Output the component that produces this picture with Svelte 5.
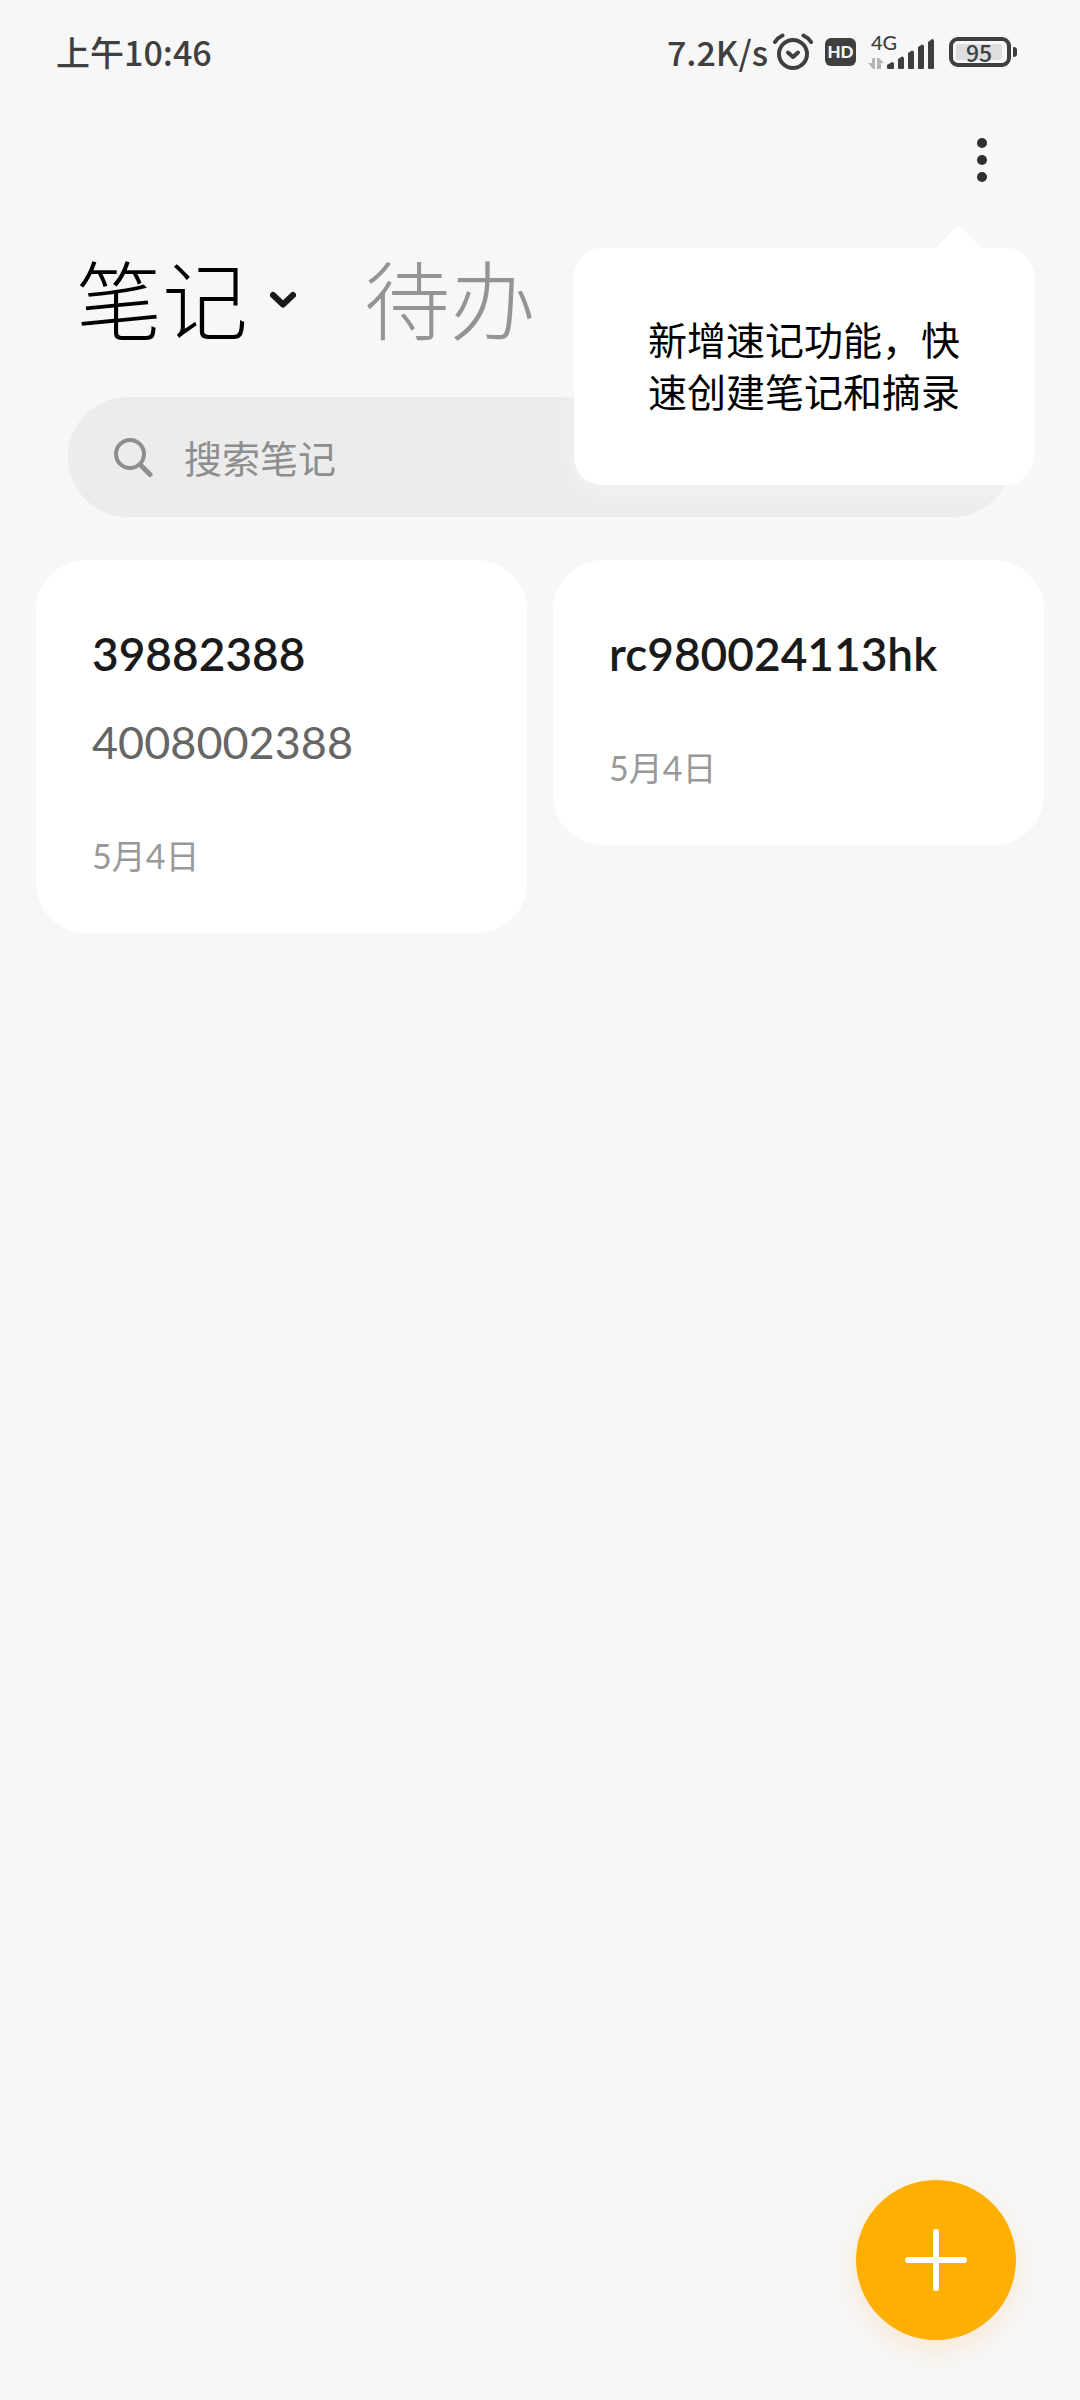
<script lang="ts">
  interface Note {
    id: number;
    title: string;
    body?: string;
    date: string;
  }

  const notes: Note[] = [
    { id: 1, title: '39882388', body: '4008002388', date: '5月4日' },
    { id: 2, title: 'rc980024113hk', date: '5月4日' },
  ];

  let activeTab = $state('notes');
  let query = $state('');
</script>

<div class="app">
  <div class="status-bar">
    <span class="status-time">上午10:46</span>
    <div class="status-icons">
      <span class="status-speed">7.2K/s</span>
      <svg class="icon-alarm" width="40" height="38" viewBox="0 0 40 38" fill="none" stroke="#3f3f3f" stroke-linecap="round">
        <circle cx="20" cy="21" r="14" stroke-width="4" />
        <path d="M15 19.5l5 4.5 5-4.5" stroke-width="4" stroke-linejoin="round" />
        <path d="M2 9Q5 4.500 9.500 2.500M38 9Q35 4.500 30.500 2.500" stroke-width="4" />
      </svg>
      <span class="hd-badge">HD</span>
      <div class="signal">
        <span class="signal-type">4G</span>
        <svg width="67" height="36" viewBox="0 0 67 36" fill="#3f3f3f">
          <path d="M4 24h3v11H5L0 29h4zM9 35V24h2l5 5h-3v6z" fill="#b5b5b5" />
          <path d="M19 31l5-3q2 0 2 2v4q0 1-1 1h-5q-1 0-1-1z" />
          <path d="M30 25l4-2.500q2 0 2 2V34q0 1-1 1h-4q-1 0-1-1z" />
          <path d="M40 19l4-2.500q2 0 2 2V34q0 1-1 1h-4q-1 0-1-1z" />
          <path d="M50 13l4-2.500q2 0 2 2V34q0 1-1 1h-4q-1 0-1-1z" />
          <path d="M60 8l4-3q2 0 2 2V34q0 1-1 1h-4q-1 0-1-1z" />
        </svg>
      </div>
      <div class="battery">
        <span class="battery-body"><span class="battery-level">95</span></span>
        <span class="battery-cap"></span>
      </div>
    </div>
  </div>

  <header class="toolbar">
    <button class="menu-button" aria-label="更多">
      <svg width="12" height="46" viewBox="0 0 12 46" fill="#303030">
        <circle cx="6" cy="6" r="5" />
        <circle cx="6" cy="23" r="5" />
        <circle cx="6" cy="40" r="5" />
      </svg>
    </button>
    <div class="tooltip" role="status">新增速记功能，快速创建笔记和摘录</div>
  </header>

  <nav class="tabs">
    <button class="tab" class:tab-active={activeTab === 'notes'} onclick={() => (activeTab = 'notes')}>
      笔记
      <svg width="26" height="24" viewBox="0 0 26 24" fill="none" stroke="#1a1a1a" stroke-width="6" stroke-linecap="round" stroke-linejoin="round">
        <path d="M3 10l10 9.500L23 10" />
      </svg>
    </button>
    <button class="tab" class:tab-active={activeTab === 'todo'} onclick={() => (activeTab = 'todo')}>待办</button>
  </nav>

  <label class="search">
    <svg width="42" height="42" viewBox="0 0 42 42" fill="none" stroke="#8e8e8e" stroke-linecap="round">
      <circle cx="18" cy="18" r="14" stroke-width="4" />
      <path d="M28.500 29L38 38.500" stroke-width="5" />
    </svg>
    <input type="text" placeholder="搜索笔记" aria-label="搜索笔记" bind:value={query} />
  </label>

  <main class="notes">
    {#each notes as note (note.id)}
      <article class="note">
        <h2 class="note-title">{note.title}</h2>
        {#if note.body}
          <p class="note-body">{note.body}</p>
        {/if}
        <time class="note-date">{note.date}</time>
      </article>
    {/each}
  </main>

  <button class="add-button" aria-label="新建笔记">
    <svg width="62" height="62" viewBox="0 0 62 62" stroke="#fff" stroke-width="6" stroke-linecap="round">
      <path d="M31 3v56M3 31h56" />
    </svg>
  </button>
</div>

<style>
  :global(body) {
    background: #f7f7f7;
  }

  .app {
    min-height: 100vh;
    background: #f7f7f7;
    color: #000;
    font-family: 'Noto Sans CJK SC', sans-serif;
  }

  button,
  input {
    padding: 0;
    border: 0;
    background: none;
    font-family: inherit;
  }

  button {
    cursor: pointer;
  }

  svg {
    display: block;
    flex: none;
  }

  .status-bar {
    display: flex;
    align-items: center;
    justify-content: space-between;
    height: 104px;
    padding: 0 63px 0 56px;
    color: #3f3f3f;
    font-size: 34px;
    font-weight: 500;
    line-height: 40px;
  }

  .status-icons {
    display: flex;
    align-items: center;
    gap: 12px;
  }

  .status-speed {
    margin-right: -7px;
  }

  .hd-badge {
    width: 31px;
    border-radius: 6px;
    background: #3f3f3f;
    color: #f7f7f7;
    font-family: Lato, sans-serif;
    font-size: 17px;
    font-weight: 900;
    line-height: 28px;
    text-align: center;
  }

  .signal {
    position: relative;
  }

  .signal-type {
    position: absolute;
    top: -2px;
    left: 3px;
    font-family: Lato, sans-serif;
    font-size: 20px;
    line-height: 20px;
  }

  .battery {
    display: flex;
    align-items: center;
    gap: 2px;
    margin-left: 2px;
  }

  .battery-body {
    box-sizing: border-box;
    width: 62px;
    height: 30px;
    padding: 3px;
    border: 4px solid #3f3f3f;
    border-radius: 9px;
  }

  .battery-level {
    display: block;
    width: 46px;
    border-radius: 2px;
    background: #dedede;
    font-size: 23px;
    line-height: 16px;
    text-align: center;
  }

  .battery-cap {
    width: 4px;
    height: 10px;
    border-radius: 1px 3px 3px 1px;
    background: #3f3f3f;
  }

  .toolbar {
    position: relative;
    display: flex;
    justify-content: flex-end;
    height: 112px;
    padding: 0 58px;
  }

  .menu-button {
    display: flex;
    align-items: center;
    justify-content: center;
    width: 80px;
    height: 112px;
  }

  .tooltip {
    position: absolute;
    z-index: 1;
    top: 144px;
    right: 46px;
    box-sizing: border-box;
    width: 460px;
    padding: 64px 72px 69px 74px;
    border-radius: 28px;
    background: #fff;
    box-shadow: 0 8px 24px rgba(255, 255, 255, 0.4);
    font-size: 39px;
    line-height: 52px;
  }

  .tooltip::before {
    content: '';
    position: absolute;
    top: -16px;
    right: 57px;
    width: 36px;
    height: 36px;
    border-radius: 6px;
    background: #fff;
    transform: rotate(45deg);
  }

  .tabs {
    display: flex;
    align-items: center;
    gap: 68px;
    height: 161px;
    padding: 0 76px;
  }

  .tab {
    display: flex;
    align-items: center;
    gap: 22px;
    color: #949494;
    font-size: 86px;
    font-weight: 300;
    line-height: 112px;
  }

  .tab-active {
    color: #000;
  }

  .search {
    display: flex;
    align-items: center;
    gap: 30px;
    height: 120px;
    margin: 20px 68px 0;
    padding: 0 44px;
    border-radius: 60px;
    background: #ececec;
  }

  .search input {
    flex: 1;
    min-width: 0;
    color: #000;
    font-size: 38px;
    line-height: 56px;
    outline: none;
  }

  .search input::placeholder {
    color: #8e8e8e;
    opacity: 1;
  }

  .notes {
    display: grid;
    grid-template-columns: 1fr 1fr;
    align-items: start;
    gap: 26px;
    padding: 43px 36px;
  }

  .note {
    padding: 64px 56px 57px;
    border-radius: 50px;
    background: #fff;
    font-family: Lato, 'Noto Sans CJK SC', sans-serif;
  }

  .note-title,
  .note-body {
    margin: 0;
    line-height: 60px;
  }

  .note-title {
    color: #1a1a1a;
    font-size: 46px;
    font-weight: 600;
  }

  .note-body {
    margin-top: 28px;
    color: #666;
    font-size: 45px;
  }

  .note-date {
    display: block;
    margin-top: 64px;
    color: #999;
    font-size: 34px;
    line-height: 40px;
  }

  .add-button {
    position: fixed;
    right: 64px;
    bottom: 60px;
    display: flex;
    align-items: center;
    justify-content: center;
    width: 160px;
    height: 160px;
    border-radius: 50%;
    background: #ffae02;
    box-shadow: 0 10px 26px rgba(255, 174, 80, 0.2);
  }
</style>
